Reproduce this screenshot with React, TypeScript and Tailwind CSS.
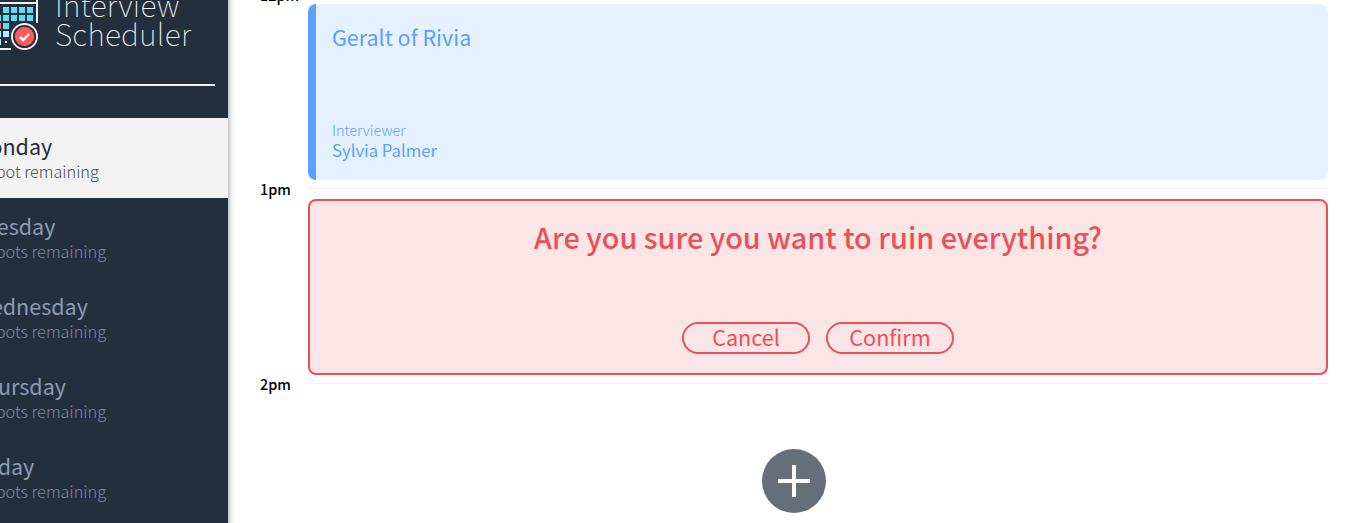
import React from "react";

const days = [
  { name: "Monday", spots: "1 spot remaining", selected: true },
  { name: "Tuesday", spots: "2 spots remaining", selected: false },
  { name: "Wednesday", spots: "2 spots remaining", selected: false },
  { name: "Thursday", spots: "2 spots remaining", selected: false },
  { name: "Friday", spots: "2 spots remaining", selected: false },
];

function Logo() {
  const cells = [
    [3, 7, "#5fdcf2"], [11, 7, "#5fdcf2"], [19, 7, "#5fdcf2"], [27, 7, "#5fdcf2"],
    [-5, 15, "#5fdcf2"], [3, 15, "#5fdcf2"], [11, 15, "#5fdcf2"], [19, 15, "#5fdcf2"], [27, 15, "#5fdcf2"],
    [-5, 23, "#ff5a5f"], [3, 23, "#5fdcf2"],
    [-5, 31, "#a5f0fa"], [3, 31, "#a5f0fa"],
    [-5, 39, "#a5f0fa"],
  ] as const;
  return (
    <svg className="block h-[52px] w-[38px] shrink-0" viewBox="0 0 38 52" fill="none">
      <path d="M0 3H37" stroke="#f2f2f2" strokeWidth="2" />
      <path d="M37 0V23" stroke="#f2f2f2" strokeWidth="2" />
      <path d="M0 49H11" stroke="#f2f2f2" strokeWidth="2" />
      {cells.map(([x, y, fill]) => (
        <rect key={`${x}-${y}`} x={x} y={y} width="6" height="6" fill={fill} />
      ))}
      <rect x="5" y="41" width="2" height="2" fill="#f2f2f2" />
      <circle cx="24.5" cy="36.5" r="13.5" fill="#f2f2f2" />
      <circle cx="24.5" cy="36.5" r="11.6" fill="#242f3d" />
      <circle cx="24.5" cy="36.5" r="9.7" fill="#ff5a5f" />
      <path d="M20 37L23.2 40L29 34" stroke="#fff" strokeWidth="2.4" />
    </svg>
  );
}

function Sidebar() {
  return (
    <aside className="z-10 flex h-full w-[228px] shrink-0 flex-col overflow-hidden bg-[#242f3d]">
      <div className="flex h-[84px] items-start">
        <Logo />
        <div className="-mt-[10px] ml-[17px] text-[30px] leading-[29px] font-thin tracking-[0.3px] text-[#f2f2f2]">
          <div>Interview</div>
          <div>Scheduler</div>
        </div>
      </div>
      <div className="mr-[13px] h-[2px] shrink-0 bg-[#f2f2f2]" />
      <nav className="mt-8">
        {days.map((day) => (
          <div
            key={day.name}
            className={
              day.selected
                ? "flex h-20 flex-col bg-[#f2f2f2] pt-3 text-[#242f3d]"
                : "flex h-20 flex-col pt-3 text-[#8a9bb5]"
            }
          >
            <div className="-ml-7 text-[21.5px] leading-8 whitespace-nowrap">{day.name}</div>
            <div className="-ml-6 text-[16.3px] leading-[18px] font-light whitespace-nowrap opacity-85">{day.spots}</div>
          </div>
        ))}
      </nav>
    </aside>
  );
}

function HourLine({ time, first = false }: { time: string; first?: boolean }) {
  return (
    <div className="flex h-[11px] items-start">
      <div
        className={
          first
            ? "w-[47px] text-[14.4px] leading-[3px] font-medium text-black"
            : "w-[47px] text-[14.4px] leading-px font-medium text-black"
        }
      >
        {time}
      </div>
      <div className="h-px flex-1 bg-[#f2f2f2]" />
    </div>
  );
}

function ActionButton({ label }: { label: string }) {
  return (
    <button className="flex h-8 w-32 items-center justify-center rounded-full border-2 border-[#ec5056] pb-0.5 text-[21.6px] leading-none text-[#ec5056]">
      {label}
    </button>
  );
}

export default function App() {
  return (
    <div className="flex h-[523px] w-full overflow-hidden bg-white font-['Noto_Sans_CJK_SC',sans-serif]">
      <Sidebar />
      <div className="h-full w-2 shrink-0 bg-linear-to-r from-[#c2c5c8] via-[#f2f2f3] to-white" />
      <main className="-mt-[7px] flex min-w-0 flex-1 flex-col pr-[30px] pl-6">
        <HourLine time="12pm" first />
        <article className="ml-12 flex h-44 shrink-0 flex-col justify-between rounded-[8px] border-l-8 border-[#5ba1ff] bg-[#e5f1fe] pt-[17px] pb-5 pl-4 text-[#5ba1ff]">
          <h2 className="text-[21.5px] leading-8">Geralt of Rivia</h2>
          <div>
            <div className="text-[14.4px] leading-5 font-light">Interviewer</div>
            <div className="text-[16.7px] leading-5">Sylvia Palmer</div>
          </div>
        </article>
        <div className="h-2 shrink-0" />
        <HourLine time="1pm" />
        <article className="ml-12 flex h-44 shrink-0 flex-col items-center justify-between rounded-[8px] border-2 border-[#ec5056] bg-[#fbe5e7] pt-4 pb-[19px] text-[#ec5056]">
          <h1 className="text-[28.8px] leading-10 font-medium">Are you sure you want to ruin everything?</h1>
          <div className="flex gap-4">
            <ActionButton label="Cancel" />
            <ActionButton label="Confirm" />
          </div>
        </article>
        <div className="h-2 shrink-0" />
        <HourLine time="2pm" />
        <div className="mt-[55px] flex justify-center">
          <button className="flex size-16 items-center justify-center rounded-full bg-[#666e7a]" aria-label="Add">
            <svg className="size-8" viewBox="0 0 32 32" fill="#fff">
              <path d="M14 0H18V14H32V18H18V32H14V18H0V14H14Z" />
            </svg>
          </button>
        </div>
      </main>
    </div>
  );
}
